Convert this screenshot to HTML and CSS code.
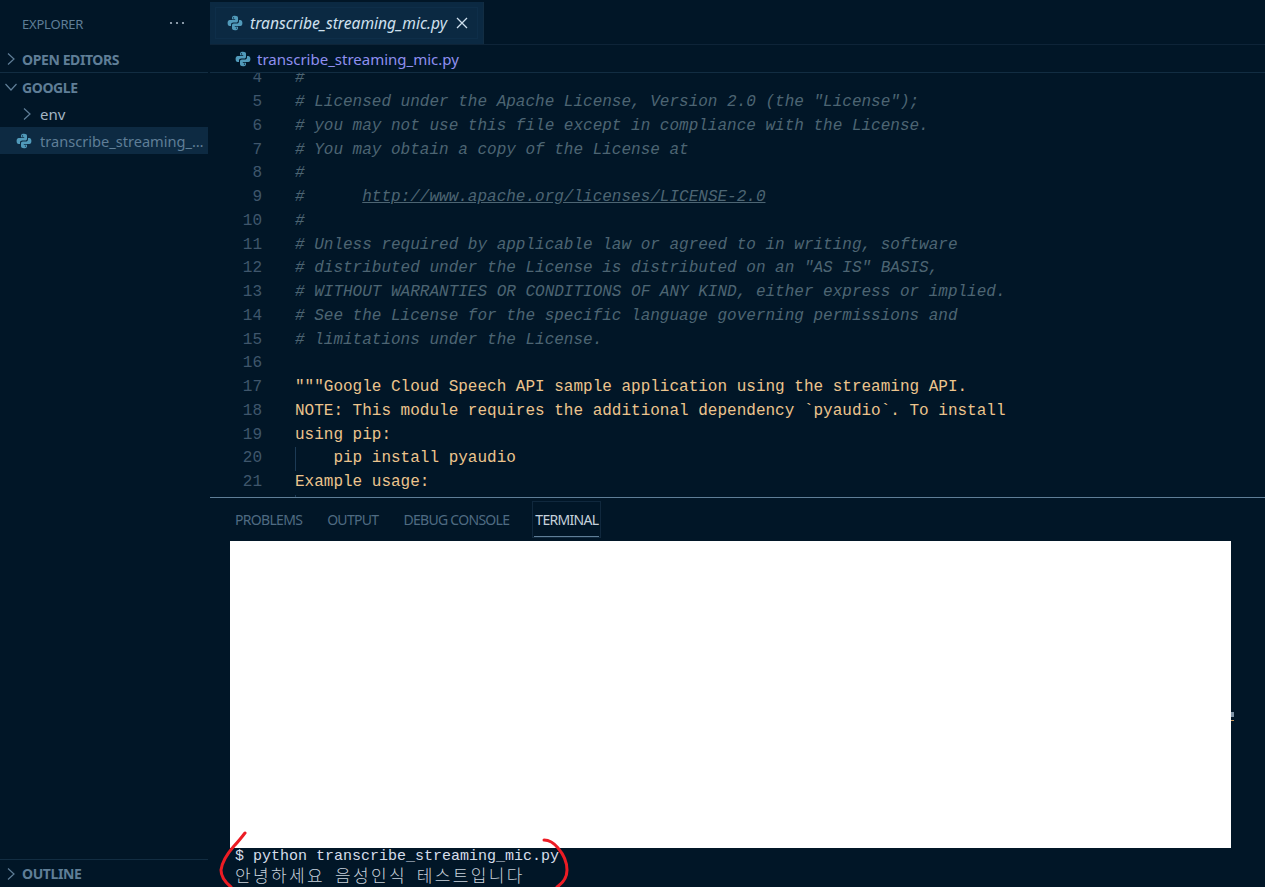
FILE: index.html
```html
<!DOCTYPE html>
<html lang="en">
<head>
<meta charset="utf-8">
<title>transcribe_streaming_mic.py</title>
<link rel="stylesheet" href="styles.css">
</head>
<body>
<svg width="0" height="0" class="defs">
  <symbol id="py" viewBox="0 0 16 16">
    <path d="M5 4.2V2.6C5 1.4 6.2.8 8 .8s3 .7 3 1.9v3c0 1-.8 1.8-1.8 1.8H6.4C4.9 7.5 4 8.400 4 9.800v1.300H2.700C1.300 11.100.6 9.800.6 8s.7-3.100 2.100-3.100H8.200V4.200H5zM6.500 2.200a.7.7 0 1 0 0 1.400.7.7 0 0 0 0-1.400z" fill="#519aba" fill-rule="evenodd"/>
    <path d="M11 11.800v1.600c0 1.200-1.200 1.800-3 1.800s-3-.7-3-1.900v-3c0-1 .8-1.800 1.800-1.800h2.800c1.500 0 2.400-.9 2.400-2.300V4.900h1.300c1.400 0 2.100 1.300 2.100 3.100s-.7 3.100-2.100 3.100H7.800v.7H11zM9.500 12.400a.7.7 0 1 0 0 1.400.7.7 0 0 0 0-1.400z" fill="#519aba" fill-rule="evenodd"/>
  </symbol>
</svg>
<div class="app">
  <aside class="sidebar">
    <div class="side-title">
      <span>EXPLORER</span>
      <svg class="dots" width="16" height="4" viewBox="0 0 16 4"><circle cx="2" cy="2" r="1.100"/><circle cx="8" cy="2" r="1.100"/><circle cx="14" cy="2" r="1.100"/></svg>
    </div>
    <div class="section sec-open">
      <svg class="chev" width="10" height="14" viewBox="0 0 10 14"><path d="M2 1.500 8 7l-6 5.500"/></svg>
      <span>OPEN EDITORS</span>
    </div>
    <div class="section sec-google">
      <svg class="chev" width="14" height="10" viewBox="0 0 14 10"><path d="M1.500 2 7 8l5.500-6"/></svg>
      <span>GOOGLE</span>
    </div>
    <div class="row row-env">
      <svg class="chev" width="10" height="14" viewBox="0 0 10 14"><path d="M2 1.500 8 7l-6 5.500"/></svg>
      <span>env</span>
    </div>
    <div class="row row-file">
      <svg class="pyicon" width="16" height="16"><use href="#py"/></svg>
      <span class="file-name">transcribe_streaming_mic.py</span>
    </div>
    <div class="side-fill"></div>
    <div class="section sec-outline">
      <svg class="chev" width="10" height="14" viewBox="0 0 10 14"><path d="M2 1.500 8 7l-6 5.500"/></svg>
      <span>OUTLINE</span>
    </div>
  </aside>
  <main class="main">
    <div class="tabs">
      <div class="tab">
        <svg class="pyicon" width="16" height="16"><use href="#py"/></svg>
        <span class="tab-name">transcribe_streaming_mic.py</span>
        <svg class="close" width="12" height="12" viewBox="0 0 12 12"><path d="M1 1l10 10M11 1 1 11"/></svg>
      </div>
    </div>
    <div class="crumbs">
      <svg class="pyicon" width="16" height="16"><use href="#py"/></svg>
      <span>transcribe_streaming_mic.py</span>
    </div>
    <div class="editor">
      <div class="lines">
        <div class="line"><span class="num">4</span><span class="c">#</span></div>
        <div class="line"><span class="num">5</span><span class="c"># Licensed under the Apache License, Version 2.0 (the "License");</span></div>
        <div class="line"><span class="num">6</span><span class="c"># you may not use this file except in compliance with the License.</span></div>
        <div class="line"><span class="num">7</span><span class="c"># You may obtain a copy of the License at</span></div>
        <div class="line"><span class="num">8</span><span class="c">#</span></div>
        <div class="line"><span class="num">9</span><span class="c">#      <span class="url">http://www.apache.org/licenses/LICENSE-2.0</span></span></div>
        <div class="line"><span class="num">10</span><span class="c">#</span></div>
        <div class="line"><span class="num">11</span><span class="c"># Unless required by applicable law or agreed to in writing, software</span></div>
        <div class="line"><span class="num">12</span><span class="c"># distributed under the License is distributed on an "AS IS" BASIS,</span></div>
        <div class="line"><span class="num">13</span><span class="c"># WITHOUT WARRANTIES OR CONDITIONS OF ANY KIND, either express or implied.</span></div>
        <div class="line"><span class="num">14</span><span class="c"># See the License for the specific language governing permissions and</span></div>
        <div class="line"><span class="num">15</span><span class="c"># limitations under the License.</span></div>
        <div class="line"><span class="num">16</span></div>
        <div class="line"><span class="num">17</span><span class="s">"""Google Cloud Speech API sample application using the streaming API.</span></div>
        <div class="line"><span class="num">18</span><span class="s">NOTE: This module requires the additional dependency `pyaudio`. To install</span></div>
        <div class="line"><span class="num">19</span><span class="s">using pip:</span></div>
        <div class="line guide"><span class="num">20</span><span class="s">    pip install pyaudio</span></div>
        <div class="line"><span class="num">21</span><span class="s">Example usage:</span></div>
        <div class="line guide"></div>
      </div>
    </div>
    <section class="panel">
      <div class="panel-tabs">
        <span class="ptab">PROBLEMS</span>
        <span class="ptab">OUTPUT</span>
        <span class="ptab">DEBUG CONSOLE</span>
        <span class="ptab active"><span class="ptab-in">TERMINAL</span></span>
      </div>
      <div class="terminal">
        <div class="redacted"></div>
        <div class="term-line">$ python transcribe_streaming_mic.py</div>
        <div class="term-line ko" lang="ko">안녕하세요 음성인식 테스트입니다</div>
      </div>
    </section>
  </main>
</div>
<i class="sliver sliver-a"></i>
<i class="sliver sliver-b"></i>
<svg class="ink" width="1265" height="887" viewBox="0 0 1265 887">
  <path d="M245 833c-4 5-7 9-11 13-7 8-12 16-13 24 0 6 4 12 10 17"/>
  <path d="M544 840c5 0 10 3 14 8 6 7 9 15 9 22 0 7-4 13-10 17"/>
</svg>
</body>
</html>
```
FILE: styles.css
```css
* { box-sizing: border-box; }
html, body { margin: 0; height: 100%; overflow: hidden; background: #011627; }
body { font-family: "Noto Sans", "Open Sans", sans-serif; color: #5f7e97; }
.defs { position: absolute; }
.app { display: flex; height: 887px; }

.sidebar { width: 210px; padding-right: 2px; display: flex; flex-direction: column; background: #011627; }
.side-title { height: 48px; padding: 0 23px 0 22px; display: flex; align-items: center; justify-content: space-between; font-size: 13px; letter-spacing: -.2px; color: #5f7e97; }
.dots { fill: #a9b8c6; margin-top: -2px; }
.chev { fill: none; stroke: #5f7e97; stroke-width: 1.200; flex: none; }
.section { display: flex; align-items: center; font-size: 14px; font-weight: 700; letter-spacing: -.4px; color: #5f7e97; }
.sec-open { height: 25px; padding: 0 0 2px 6px; gap: 6px; border-bottom: 1px solid #122d42; }
.sec-google { height: 27px; padding: 1px 0 0 4px; gap: 4px; }
.row { height: 27px; display: flex; align-items: center; font-size: 15px; }
.row-env { padding-left: 22px; gap: 8px; color: #a4b5c4; }
.row-file { padding: 1px 0 0 16px; gap: 8px; font-size: 14.600px; background: #0d2a42; color: #5f7e97; }
.file-name { flex: 1; min-width: 0; overflow: hidden; white-space: nowrap; text-overflow: ellipsis; }
.pyicon { flex: none; }
.side-fill { flex: 1; }
.sec-outline { height: 28px; padding-left: 6px; gap: 6px; border-top: 1px solid #122d42; }

.main { flex: 1; min-width: 0; display: flex; flex-direction: column; }
.tabs { height: 45px; padding-top: 2px; display: flex; border-bottom: 1px solid #0e2438; }
.tab { width: 274px; display: flex; align-items: center; padding-left: 17px; background: #0b2942; border-right: 1px solid #122d42; box-shadow: inset 0 0 0 5px #0b2942, inset 0 0 0 6px #0e2e49; }
.tab-name { margin-left: 7px; font-size: 15.600px; font-style: italic; color: #cfe0ee; }
.close { margin-left: 9px; fill: none; stroke: #cfe0ee; stroke-width: 1.300; }
.crumbs { height: 28px; padding-left: 25px; display: flex; align-items: center; gap: 6px; font-size: 15px; color: #8f8ff0; border-bottom: 1px solid #122d42; }

.editor { height: 424px; overflow: hidden; font-family: "Liberation Mono", "DejaVu Sans Mono", monospace; font-size: 16px; }
.lines { margin-top: -5.600px; }
.line { height: 23.750px; line-height: 23.750px; display: flex; white-space: pre; position: relative; }
.num { width: 52px; margin-right: 33px; text-align: right; color: #3f566c; }
.c { font-style: italic; color: #4d6573; }
.url { text-decoration: underline; }
.s { color: #ecc48d; }
.guide::before { content: ""; position: absolute; left: 85px; top: 0; bottom: 0; border-left: 1px solid #1c3a55; }

.panel { flex: 1; min-height: 0; border-top: 1px solid #5f7e97; display: flex; flex-direction: column; }
.panel-tabs { height: 43px; padding: 3px 0 3px 25px; display: flex; align-items: stretch; gap: 25px; font-size: 14px; letter-spacing: -.7px; color: #4f6b82; }
.ptab { display: flex; align-items: center; }
.ptab.active { margin-left: -2px; margin-right: -2px; padding: 0 1px 0; border: 1px solid #10283d; color: #c6d2dc; }
.ptab-in { height: 100%; display: flex; align-items: center; padding: 0 1px; border-bottom: 1px solid #5f7e97; }
.terminal { flex: 1; padding-left: 20px; font-family: "Liberation Mono", "DejaVu Sans Mono", monospace; font-size: 15px; color: #d6deeb; }
.redacted { width: 1001px; height: 307px; margin-bottom: -1px; background: #fff; }
.term-line { height: 19px; line-height: 19px; padding-left: 5px; white-space: pre; }
.ko { height: 17px; line-height: 17px; font-family: "Noto Sans CJK KR", sans-serif; font-size: 17px; font-weight: 300; letter-spacing: 2.360px; word-spacing: 2.800px; color: #c8d2dc; }

.sliver { position: absolute; left: 1231px; width: 3px; }
.sliver-a { top: 712px; height: 5px; background: #7f93a5; }
.sliver-b { top: 720px; height: 1px; background: #c99a5f; }
.ink { position: absolute; left: 0; top: 0; fill: none; stroke: #ec1c24; stroke-width: 3; stroke-linecap: round; pointer-events: none; }
```
